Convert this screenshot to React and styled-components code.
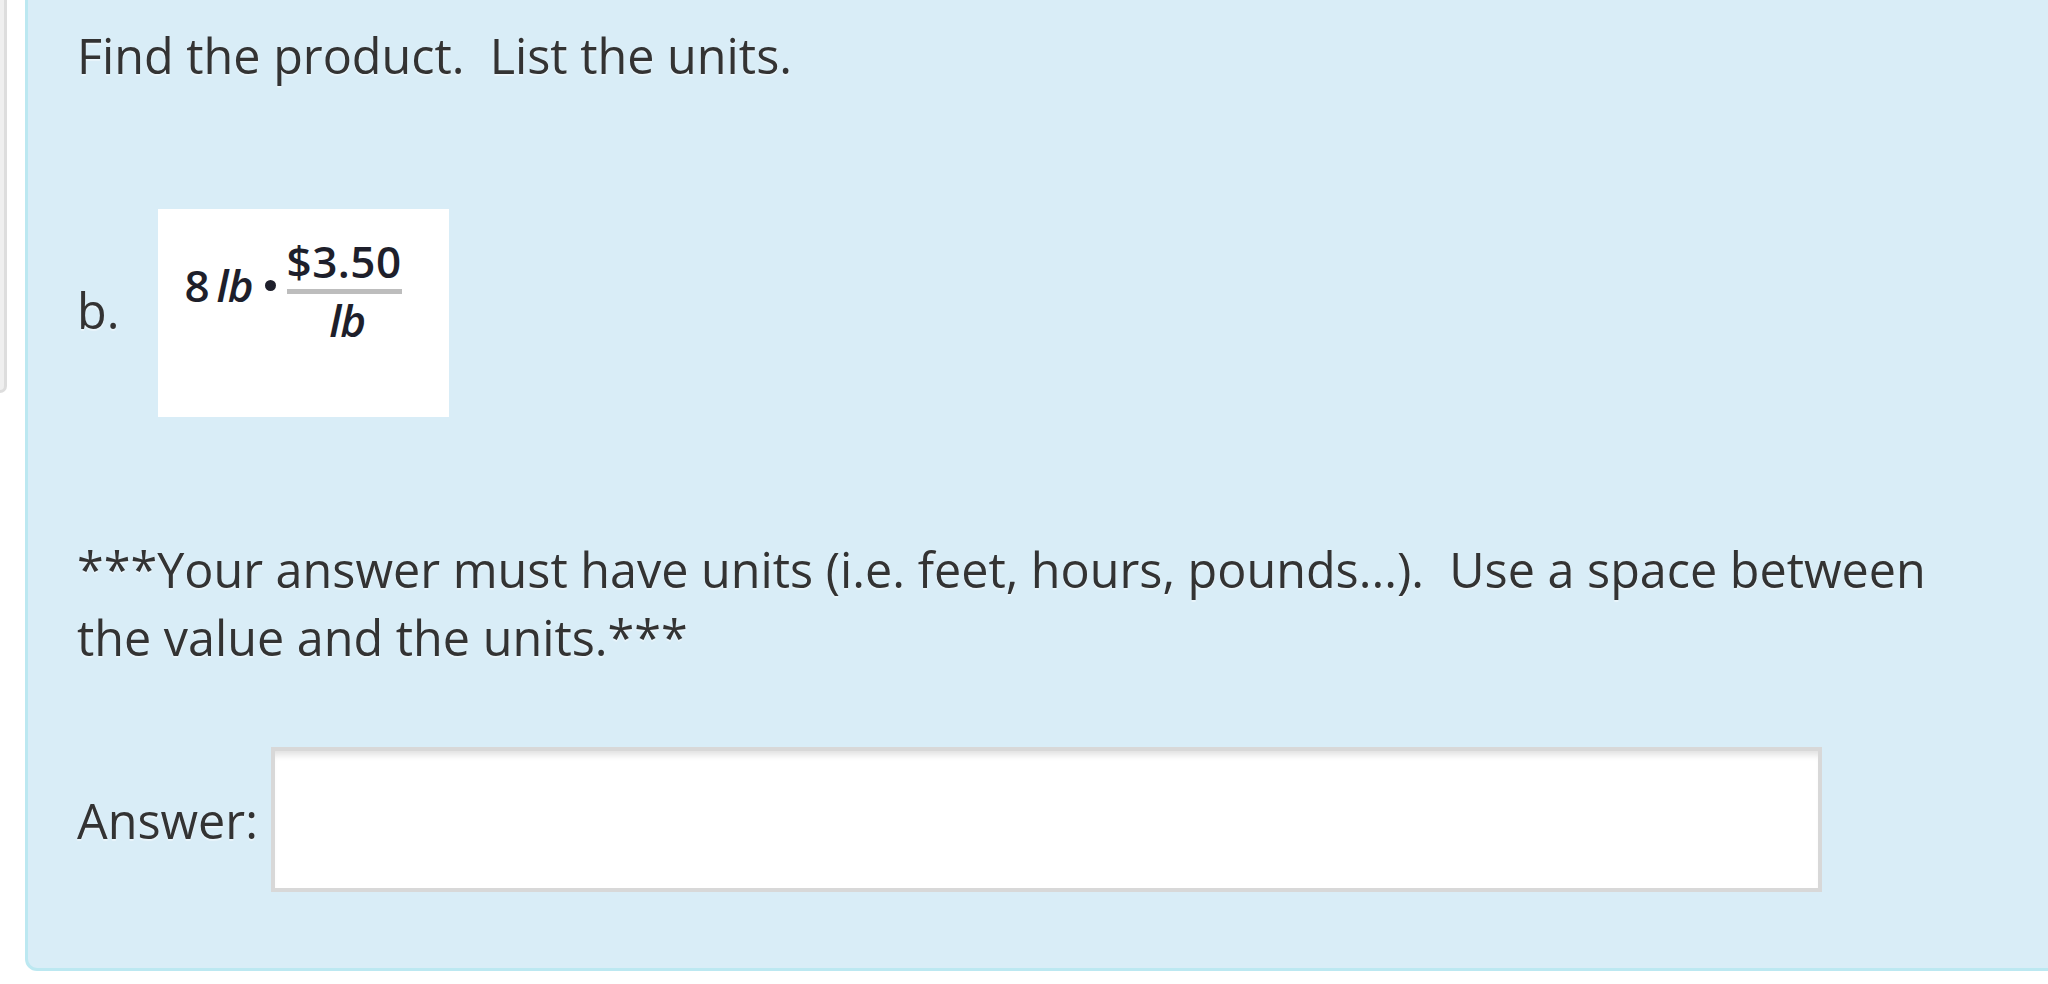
import React from 'react'
import styled, { createGlobalStyle } from 'styled-components'

const GlobalStyle = createGlobalStyle`
  html, body {
    margin: 0;
    padding: 0;
    background: #ffffff;
  }
  body {
    font-family: "Open Sans", "Noto Sans", sans-serif;
    color: #333333;
    overflow: hidden;
  }
`;

const Page = styled.div`
  display: flex;
  align-items: flex-start;
  margin-top: -27px;
  width: 2048px;
  height: 1011px;
  overflow: hidden;
`;

const InfoBox = styled.div`
  flex: 0 0 auto;
  width: 4px;
  height: 417px;
  background: #efefef;
  border: 3px solid #dddddd;
  border-left: none;
  border-top: none;
  border-bottom-right-radius: 10px;
  margin-right: 18px;
`;

const Formulation = styled.div`
  flex: 0 0 2080px;
  box-sizing: border-box;
  background: #d9edf7;
  border: 3px solid #bce8f1;
  border-radius: 12px;
  padding: 45px 120px 76px 49px;
  font-size: 48.5px;
  line-height: 68px;
  color: #333333;
  text-shadow: 0 2px 1px rgba(255, 255, 255, 0.45);
`;

const Line = styled.p`
  margin: 0;
  margin-top: ${p => p.$top || 0}px;
`;

const ItemRow = styled.div`
  display: flex;
  align-items: center;
  gap: ${p => p.$gap || 0}px;
  margin-top: ${p => p.$top || 0}px;
`;

const Label = styled.span`
  flex: 0 0 auto;
  margin-top: ${p => p.$shift || 0}px;
`;

const FormulaImage = styled.div`
  flex: 0 0 auto;
  width: 291px;
  height: 208px;
  box-sizing: border-box;
  background: #ffffff;
  display: flex;
  align-items: flex-start;
  padding: 30px 0 0 26px;
  font-family: "Open Sans", "Noto Sans", sans-serif;
  font-weight: 600;
  font-size: 44px;
  line-height: 44px;
  color: #1e1f2b;
  text-shadow: none;
`;

const Term = styled.span`
  display: inline-flex;
  align-items: baseline;
  margin-top: 24px;
  white-space: pre;
`;

const Unit = styled.i`
  font-style: italic;
  margin-left: 7px;
  letter-spacing: -1px;
`;

const Dot = styled.span`
  display: inline-block;
  width: 11px;
  height: 11px;
  border-radius: 50%;
  background: #1e1f2b;
  margin: 0 11px 0 12px;
  transform: translateY(-11px);
`;

const Fraction = styled.span`
  display: inline-flex;
  flex-direction: column;
  align-items: center;
`;

const Numerator = styled.span`
  letter-spacing: 0.5px;
`;

const Denominator = styled.i`
  font-style: italic;
  letter-spacing: -1px;
  margin-left: 6px;
`;

const Bar = styled.span`
  align-self: stretch;
  height: 5px;
  background: #bdbdbd;
  margin: 6px 0 4px;
`;

const AnswerInput = styled.input`
  flex: 0 0 auto;
  width: 1551px;
  height: 145px;
  box-sizing: border-box;
  border: 4px solid #d8d8d8;
  background: #ffffff;
  box-shadow: inset 0 8px 6px -4px rgba(0, 0, 0, 0.12);
  outline: none;
  font-family: "Open Sans", sans-serif;
  font-size: 42px;
  padding: 0 16px;
`;

export default function App() {
  return (
    <>
      <GlobalStyle />
      <Page>
        <InfoBox />
        <Formulation>
          <Line>Find the product.&nbsp; List the units.</Line>

          <ItemRow $top={120} $gap={39}>
            <Label $shift={-6}>b.</Label>
            <FormulaImage>
              <Term>
                8<Unit>lb</Unit>
                <Dot />
              </Term>
              <Fraction>
                <Numerator>$3.50</Numerator>
                <Bar />
                <Denominator>lb</Denominator>
              </Fraction>
            </FormulaImage>
          </ItemRow>

          <Line $top={118}>
            ***Your answer must have units (i.e. feet, hours, pounds...).&nbsp; Use a space between the value and the units.***
          </Line>

          <ItemRow $top={76} $gap={13}>
            <Label $shift={0}>Answer:</Label>
            <AnswerInput type="text" />
          </ItemRow>
        </Formulation>
      </Page>
    </>
  );
}
